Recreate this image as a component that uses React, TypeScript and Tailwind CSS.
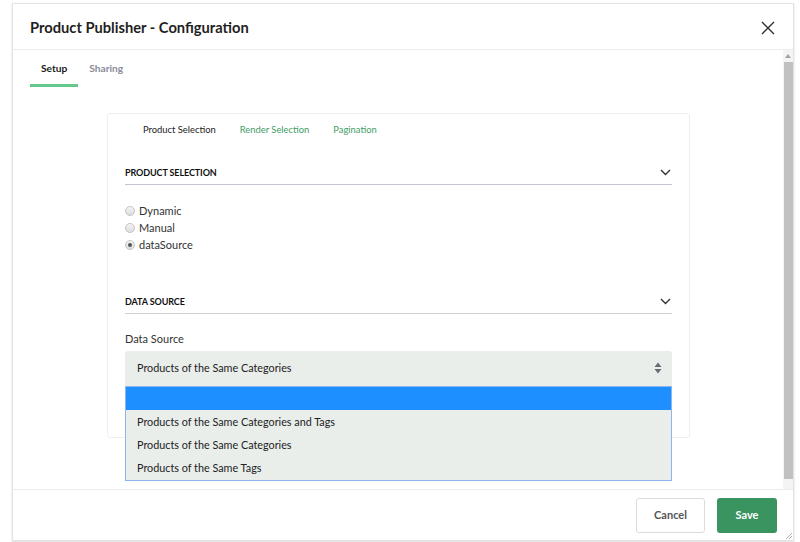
import { useState } from "react";

const options = [
  "",
  "Products of the Same Categories and Tags",
  "Products of the Same Categories",
  "Products of the Same Tags",
];

function Chevron() {
  return (
    <svg width="11" height="7" viewBox="0 0 11 7" fill="none">
      <path d="M1 1l4.5 4.5L10 1" stroke="#333" strokeWidth="1.4" />
    </svg>
  );
}

function Radio({ label, checked }: { label: string; checked?: boolean }) {
  return (
    <label className="flex items-center gap-[4px] h-[17px] text-[11px] text-[#333]">
      <span className="w-[10px] h-[10px] rounded-full border border-[#c4c4c4] bg-gradient-to-b from-[#f4f4f4] to-[#dcdcdc] flex items-center justify-center">
        {checked && <span className="w-[4px] h-[4px] rounded-full bg-[#555]" />}
      </span>
      {label}
    </label>
  );
}

function SectionHeader({ title, lineColor }: { title: string; lineColor: string }) {
  return (
    <div className={`flex items-center justify-between h-[24px] border-b ${lineColor}`}>
      <span className="text-[9px] font-bold text-[#111] tracking-[-0.1px]">{title}</span>
      <span className="mr-[1px]">
        <Chevron />
      </span>
    </div>
  );
}

export default function App() {
  const [tab] = useState("setup");

  return (
    <div className="w-[800px] h-[542px] bg-white pt-[3px] pl-[12px] font-['Lato',sans-serif] overflow-hidden">
      <div className="w-[782px] h-[538px] border border-[#e3e3e3] shadow-[0_1px_2px_rgba(0,0,0,0.15)] flex flex-col bg-white">
        <header className="h-[46px] flex items-center justify-between pl-[17px] pr-[18px] pt-[2px] border-b border-[#ececec] shrink-0">
          <h1 className="text-[14.7px] font-bold text-[#1f1f1f]">Product Publisher - Configuration</h1>
          <svg width="14" height="14" viewBox="0 0 14 14">
            <path d="M1 1l12 12M13 1L1 13" stroke="#333" strokeWidth="1.4" />
          </svg>
        </header>

        <div className="flex flex-1 min-h-0">
          <div className="flex-1 relative">
            <nav className="flex pl-[17px] pt-[11px] gap-[11px] text-[10.2px] font-bold">
              <div className={`px-[11px] pb-[8px] border-b-[3px] ${tab === "setup" ? "border-[#64c98b] text-[#1a1a1a]" : "border-transparent"}`}>
                Setup
              </div>
              <div className="pb-[8px] text-[#8a8a9a]">Sharing</div>
            </nav>

            <div className="ml-[94px] mt-[26px] w-[583px] h-[325px] border border-[#efefef] rounded-[3px] px-[17px]">
              <div className="flex gap-[24px] pl-[18px] pt-[9px] text-[9.4px]">
                <span className="text-[#222]">Product Selection</span>
                <span className="text-[#3f9d67]">Render Selection</span>
                <span className="text-[#3f9d67]">Pagination</span>
              </div>

              <div className="mt-[24px]">
                <SectionHeader title="PRODUCT SELECTION" lineColor="border-[#c5c2d6]" />
                <div className="mt-[17px] flex flex-col">
                  <Radio label="Dynamic" />
                  <Radio label="Manual" />
                  <Radio label="dataSource" checked />
                </div>
              </div>

              <div className="mt-[37px]">
                <SectionHeader title="DATA SOURCE" lineColor="border-[#cfcfd6]" />
                <div className="mt-[17px] text-[11px] text-[#333]">Data Source</div>
                <div className="relative mt-[3px]">
                  <div className="h-[35px] bg-[#e9eeeb] rounded-t-[3px] flex items-center justify-between pl-[12px] pr-[10px] text-[10.8px] text-[#222]">
                    Products of the Same Categories
                    <svg width="8" height="12" viewBox="0 0 8 12">
                      <path d="M4 0.5L7.5 5H0.5z M4 11.5L7.5 7H0.5z" fill="#6a6a75" />
                    </svg>
                  </div>
                  <ul className="absolute left-0 right-0 top-[35px] z-10 bg-[#e9eeeb] border border-[#8fb6ec] text-[10.8px] text-[#222]">
                    {options.map((o, i) => (
                      <li
                        key={i}
                        className={`h-[23px] flex items-center pl-[11px] ${i === 0 ? "bg-[#1e8fff] mb-[1px]" : ""}`}
                      >
                        {o}
                      </li>
                    ))}
                  </ul>
                </div>
              </div>
            </div>
          </div>

          <div className="w-[10px] bg-[#f4f4f4] flex flex-col items-center shrink-0">
            <div className="h-[12px] flex items-center justify-center">
              <svg width="6" height="4" viewBox="0 0 6 4">
                <path d="M3 0L6 4H0z" fill="#a3a3a3" />
              </svg>
            </div>
            <div className="w-[9px] flex-1 bg-[#c1c1c1] mb-[10px]" />
          </div>
        </div>

        <footer className="h-[51px] border-t border-[#ececec] flex items-center justify-end gap-[12px] pr-[16px] shrink-0 relative">
          <button className="w-[69px] h-[35px] border border-[#dcdcdc] rounded-[3px] bg-white text-[11px] font-bold text-[#555]">
            Cancel
          </button>
          <button className="w-[60px] h-[35px] rounded-[3px] bg-[#3a9460] text-[11px] font-bold text-white">
            Save
          </button>
          <svg className="absolute right-[1px] bottom-[1px]" width="6" height="6" viewBox="0 0 6 6">
            <path d="M6 0L0 6M6 3L3 6" stroke="#999" strokeWidth="0.8" />
          </svg>
        </footer>
      </div>
    </div>
  );
}
